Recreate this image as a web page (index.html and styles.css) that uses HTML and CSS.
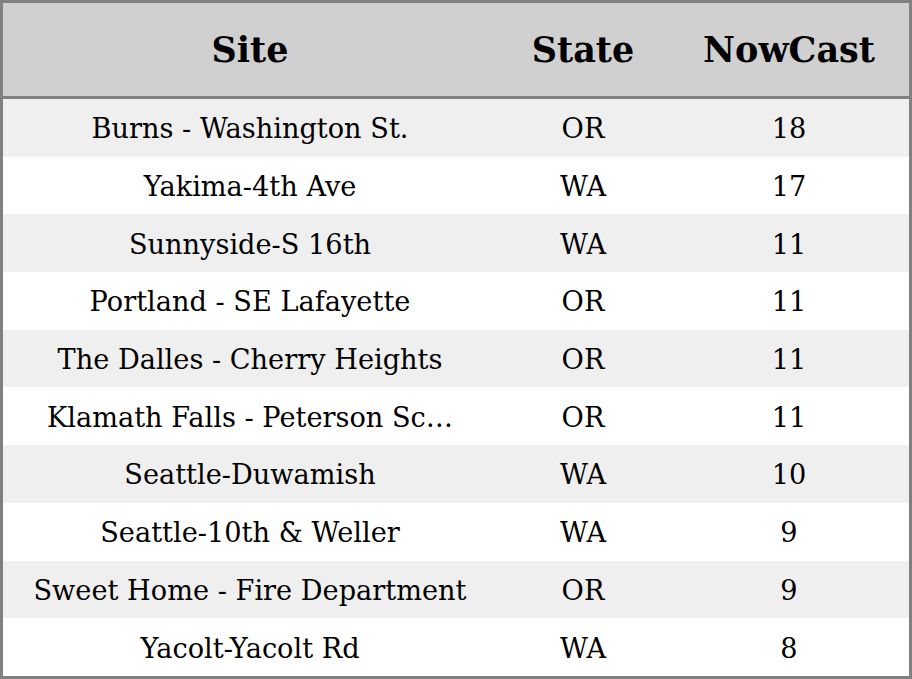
FILE: index.html
```html
<!DOCTYPE html>
<html>
<head>
<meta charset="utf-8">
<link rel="stylesheet" href="styles.css">
</head>
<body>
<table class="aq-table">
  <colgroup>
    <col class="col-site">
    <col class="col-state">
    <col class="col-now">
  </colgroup>
  <thead>
    <tr><th>Site</th><th>State</th><th>NowCast</th></tr>
  </thead>
  <tbody>
    <tr><td>Burns - Washington St.</td><td>OR</td><td>18</td></tr>
    <tr><td>Yakima-4th Ave</td><td>WA</td><td>17</td></tr>
    <tr><td>Sunnyside-S 16th</td><td>WA</td><td>11</td></tr>
    <tr><td>Portland - SE Lafayette</td><td>OR</td><td>11</td></tr>
    <tr><td>The Dalles - Cherry Heights</td><td>OR</td><td>11</td></tr>
    <tr><td>Klamath Falls - Peterson Sc…</td><td>OR</td><td>11</td></tr>
    <tr><td>Seattle-Duwamish</td><td>WA</td><td>10</td></tr>
    <tr><td>Seattle-10th &amp; Weller</td><td>WA</td><td>9</td></tr>
    <tr><td>Sweet Home - Fire Department</td><td>OR</td><td>9</td></tr>
    <tr><td>Yacolt-Yacolt Rd</td><td>WA</td><td>8</td></tr>
  </tbody>
</table>
</body>
</html>
```
FILE: styles.css
```css
html, body {
  margin: 0;
  padding: 0;
  background: #ffffff;
}
.aq-table {
  width: 912px;
  height: 679px;
  border-collapse: separate;
  border-spacing: 0;
  border: 3px solid #808080;
  box-sizing: border-box;
  table-layout: fixed;
  font-family: "DejaVu Serif", serif;
  color: #000;
}
.col-site { width: 494px; }
.col-state { width: 172px; }
.col-now { width: 240px; }
.aq-table th {
  height: 93px;
  background: #d0d0d0;
  border-bottom: 3px solid #808080;
  font-size: 35px;
  font-weight: bold;
  text-align: center;
  padding: 0;
}
.aq-table td {
  font-size: 27.2px;
  text-align: center;
  padding: 2px 0 0 0;
  white-space: nowrap;
}
.aq-table tbody tr:nth-child(odd) td {
  background: #efefef;
}
.aq-table tbody tr:nth-child(even) td {
  background: #ffffff;
}
```
